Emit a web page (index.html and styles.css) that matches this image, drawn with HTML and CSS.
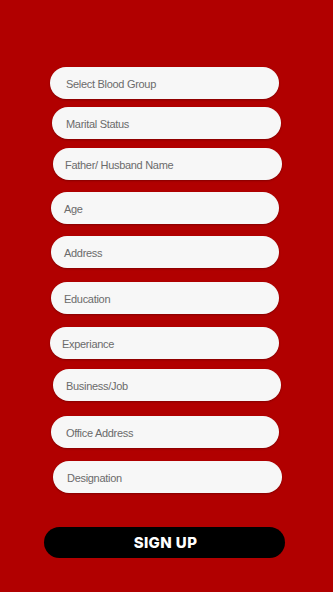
FILE: index.html
```html
<!DOCTYPE html>
<html lang="en">
<head>
<meta charset="utf-8">
<title>Sign Up</title>
<link rel="stylesheet" href="styles.css">
</head>
<body>
<main class="screen">
  <form class="form">
    <div class="field f1"><span class="ph">Select Blood Group</span></div>
    <div class="field f2"><span class="ph">Marital Status</span></div>
    <div class="field f3"><span class="ph">Father/ Husband Name</span></div>
    <div class="field f4"><span class="ph">Age</span></div>
    <div class="field f5"><span class="ph">Address</span></div>
    <div class="field f6"><span class="ph">Education</span></div>
    <div class="field f7"><span class="ph">Experiance</span></div>
    <div class="field f8"><span class="ph">Business/Job</span></div>
    <div class="field f9"><span class="ph">Office Address</span></div>
    <div class="field f10"><span class="ph">Designation</span></div>
    <button type="button" class="signup">SIGN UP</button>
  </form>
</main>
</body>
</html>
```

FILE: styles.css
```css
html, body {
  margin: 0;
  padding: 0;
  height: 100%;
}
body {
  background: #b10000;
  font-family: "Liberation Sans", Arial, sans-serif;
}
.screen {
  height: 592px;
  box-sizing: border-box;
  padding-top: 67px;
}
.form {
  display: flex;
  flex-direction: column;
  align-items: flex-start;
}
.field {
  box-sizing: border-box;
  width: 229px;
  height: 32px;
  border-radius: 16px;
  background: #f7f7f7;
  box-shadow: 0 1px 2px rgba(0,0,0,0.25);
  display: flex;
  align-items: center;
  padding-left: 14px;
  padding-top: 1px;
}
.ph {
  font-size: 11px;
  letter-spacing: -0.3px;
  color: #6b6b6b;
}
.f1 { margin-left: 50px; padding-left: 16px; }
.f2 { margin-top: 8px; margin-left: 52px; }
.f3 { margin-top: 9px; margin-left: 53px; padding-left: 12px; }
.f4 { margin-top: 12px; margin-left: 51px; width: 228px; padding-left: 13px; }
.f5 { margin-top: 12px; margin-left: 51px; width: 228px; padding-left: 13px; }
.f6 { margin-top: 14px; margin-left: 51px; width: 228px; padding-left: 13px; }
.f7 { margin-top: 13px; margin-left: 50px; padding-left: 12px; }
.f8 { margin-top: 10px; margin-left: 53px; width: 228px; padding-left: 13px; }
.f9 { margin-top: 15px; margin-left: 51px; width: 228px; padding-left: 15px; }
.f10 { margin-top: 13px; margin-left: 53px; padding-left: 14px; }
.signup {
  margin-top: 34px;
  margin-left: 44px;
  width: 241px;
  height: 31px;
  border: none;
  border-radius: 16px;
  background: #000;
  color: #fff;
  font-family: Inter, "Open Sans", sans-serif;
  font-weight: 800;
  font-size: 15px;
  letter-spacing: 0.4px;
  padding: 0 0 0 2px;
}
```
